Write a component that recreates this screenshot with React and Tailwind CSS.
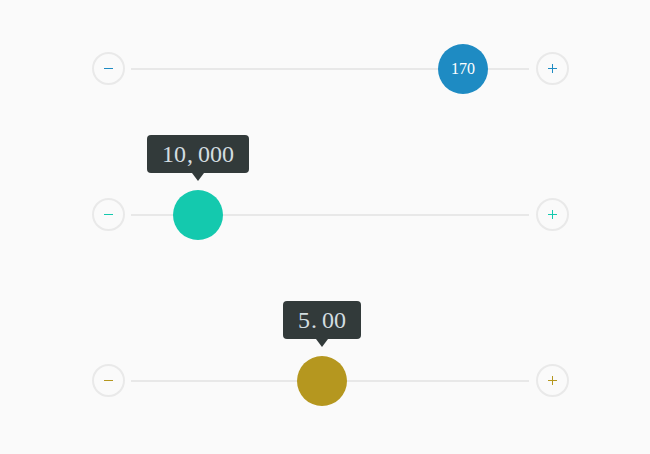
import React from 'react';

const sliders = [
    { id: 'a', value: '170', pos: 332, color: '#1e8bc3', top: 'mt-[43px]', tooltip: false },
    { id: 'b', value: '10,000', pos: 67, color: '#14c9ae', top: 'mt-[96px]', tooltip: true },
    { id: 'c', value: '5.00', pos: 191, color: '#b5971f', top: 'mt-[116px]', tooltip: true },
];

const StepButton = ({ sign, color }) => (
    <button className="self-start mt-[8px] w-[33px] h-[33px] shrink-0 rounded-full border-2 border-[#e9e9e9] bg-[#fafafa] relative">
        <span className="absolute left-[10px] top-[14px] w-[9px] h-px" style={{ backgroundColor: color }} />
        {sign === '+' && <span className="absolute left-[14px] top-[10px] w-px h-[9px]" style={{ backgroundColor: color }} />}
    </button>
);

// SimSun-like look: serif digits in half-width cells, punctuation sits left
const MonoText = ({ text }) => (
    <span className="flex">
        {text.split('').map((ch, i) => (
            <span key={i} className={`inline-block w-[12px] ${ch === ',' || ch === '.' ? 'text-left pl-[1px]' : 'text-center'}`}>{ch}</span>
        ))}
    </span>
);

const Slider = ({ value, pos, color, top, tooltip }) => (
    <div className={`${top} flex items-center h-[50px]`}>
        <StepButton sign="-" color={color} />
        <div className="relative flex-1 h-[2px] bg-[#e8e8e8] ml-[6px] mr-[7px]">
            <div
                className="absolute top-[-24px] w-[50px] h-[50px] -ml-[25px] rounded-full flex items-center justify-center text-white text-[16px] font-['Liberation_Serif',serif]"
                style={{ left: pos, backgroundColor: color }}
            >
                {!tooltip && value}
                {tooltip && (
                    <div className="absolute bottom-[59px] left-1/2 -translate-x-1/2 flex flex-col items-center">
                        <div className="h-[38px] px-[15px] rounded-[4px] bg-[#323a3a] text-[#d3dde0] text-[24px] leading-none flex items-center font-['Liberation_Serif',serif] whitespace-nowrap">
                            <MonoText text={value} />
                        </div>
                        <div className="w-0 h-0 border-l-[6px] border-r-[6px] border-t-[8px] border-l-transparent border-r-transparent border-t-[#323a3a]" />
                    </div>
                )}
            </div>
        </div>
        <StepButton sign="+" color={color} />
    </div>
);

const App = () => (
    <div className="w-[650px] h-[454px] bg-[#fafafa] overflow-hidden">
        <div className="ml-[92px] w-[477px] pt-px">
            {sliders.map(s => (
                <Slider key={s.id} {...s} />
            ))}
        </div>
    </div>
);

export default App;
